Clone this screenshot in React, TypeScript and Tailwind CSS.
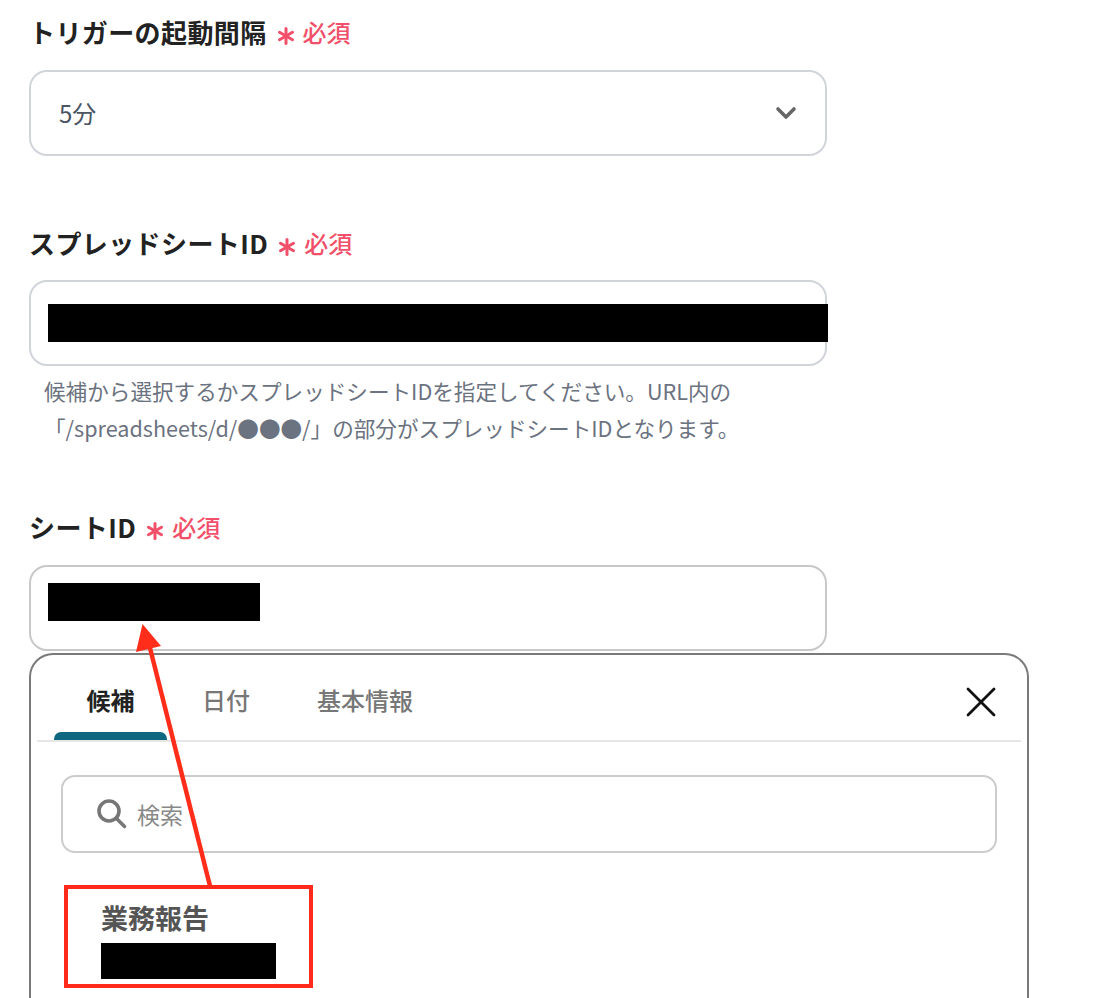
import React from 'react';

const Required: React.FC = () => (
  <span className="flex items-center">
    <svg width="18" height="18" viewBox="0 0 18 18" className="ml-[10px] mt-[7px]" aria-hidden>
      <g stroke="#f2506a" strokeWidth="3" strokeLinecap="round">
        <line x1="9" y1="1.5" x2="9" y2="16.5" />
        <line x1="2.5" y1="5.25" x2="15.5" y2="12.75" />
        <line x1="2.5" y1="12.75" x2="15.5" y2="5.25" />
      </g>
    </svg>
    <span className="ml-[8px] text-[24px] leading-[32px] font-medium text-[#f2506a]">必須</span>
  </span>
);

const FieldLabel: React.FC<{ text: string; className?: string }> = ({ text, className }) => (
  <div className={`flex items-center ${className ?? ''}`}>
    <span className="text-[26px] leading-[32px] font-bold text-[#222] tracking-[0.4px]">{text}</span>
    <Required />
  </div>
);

export default function App() {
  return (
    <div className="relative min-h-[998px] bg-white font-['Noto_Sans_CJK_JP','Noto_Sans',sans-serif] pl-[29px] pt-[16px] overflow-hidden">
      {/* trigger interval */}
      <FieldLabel text="トリガーの起動間隔" />
      <div className="mt-[22px] w-[798px] h-[86px] rounded-[18px] border-2 border-[#d1d5db] flex items-center pl-[28px] pr-[28px]">
        <span className="text-[24px] text-[#4b5563]">5分</span>
        <svg width="22" height="14" viewBox="0 0 22 14" className="ml-auto" aria-hidden>
          <path d="M3 3 L11 11 L19 3" fill="none" stroke="#666" strokeWidth="3.6" strokeLinecap="round" strokeLinejoin="round" />
        </svg>
      </div>

      {/* spreadsheet id */}
      <FieldLabel text="スプレッドシートID" className="mt-[71px]" />
      <div className="mt-[21px] w-[798px] h-[86px] rounded-[18px] border-2 border-[#d1d5db] flex items-center pl-[17px]">
        <div className="w-[780px] h-[38px] bg-black shrink-0" />
      </div>
      <div className="mt-[6px] pl-[15px] text-[21.6px] leading-[37px] text-[#6b7280]">
        <p>候補から選択するかスプレッドシートIDを指定してください。URL内の</p>
        <p>「/spreadsheets/d/●●●/」の部分がスプレッドシートIDとなります。</p>
      </div>

      {/* sheet id */}
      <FieldLabel text="シートID" className="mt-[65px]" />
      <div className="mt-[22px] w-[798px] h-[86px] rounded-[18px] border-2 border-[#c8c8c8] pl-[17px] pt-[16px]">
        <div className="w-[212px] h-[38px] bg-black" />
      </div>

      {/* popup */}
      <div className="mt-[2px] w-[1000px] rounded-t-[24px] border-2 border-b-0 border-[#7a7a7a] bg-white pb-[60px]">
        <div className="mx-[6px] flex items-start border-b-2 border-[#e6e6e6]">
          <div className="ml-[17px] w-[113px] flex flex-col items-center">
            <span className="pt-[29px] text-[24px] leading-[32px] font-bold text-[#222]">候補</span>
            <div className="mt-[16px] w-full h-[8px] rounded-t-[7px] bg-[#0d6880]" />
          </div>
          <span className="ml-[35px] pt-[29px] text-[24px] leading-[32px] font-medium text-[#777]">日付</span>
          <span className="ml-[67px] pt-[29px] text-[24px] leading-[32px] font-medium text-[#777]">基本情報</span>
          <svg width="30" height="30" viewBox="0 0 30 30" className="ml-auto mr-[25px] mt-[32px]" aria-hidden>
            <g stroke="#111" strokeWidth="2.8" strokeLinecap="round">
              <line x1="2" y1="2" x2="28" y2="28" />
              <line x1="28" y1="2" x2="2" y2="28" />
            </g>
          </svg>
        </div>

        <div className="px-[30px]">
          <div className="mt-[33px] h-[78px] rounded-[14px] border-2 border-[#cccccc] flex items-center pl-[33px]">
            <svg width="32" height="32" viewBox="0 0 32 32" aria-hidden>
              <circle cx="13" cy="13" r="10" fill="none" stroke="#777" strokeWidth="3.6" />
              <line x1="20.5" y1="20.5" x2="28.5" y2="28.5" stroke="#777" strokeWidth="3.6" strokeLinecap="round" />
            </svg>
            <span className="ml-[9px] text-[23px] text-[#888]">検索</span>
          </div>

          <div className="mt-[32px] ml-[3px] w-[249px] border-4 border-[#ff2a1a] pl-[33px] pt-[11px] pb-[5px]">
            <div className="text-[27px] leading-[36px] font-bold text-[#555]">業務報告</div>
            <div className="mt-[7px] w-[175px] h-[36px] bg-black" />
          </div>
        </div>
      </div>

      {/* annotation arrow */}
      <svg className="absolute left-0 top-0 pointer-events-none" width="1096" height="998" aria-hidden>
        <line x1="150" y1="648" x2="210" y2="886" stroke="#ff2d1a" strokeWidth="4.5" />
        <polygon points="142.5,624 136,652 161,646" fill="#ff2d1a" />
      </svg>
    </div>
  );
}
